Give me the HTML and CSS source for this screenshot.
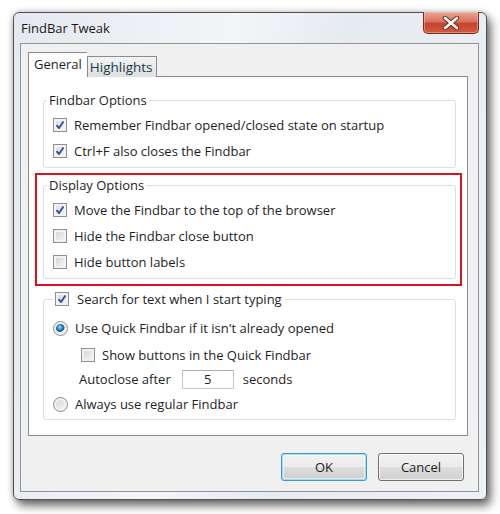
FILE: index.html
```html
<!DOCTYPE html>
<html lang="en">
  <head>
    <meta charset="UTF-8" />
    <link rel="stylesheet" href="styles.css">
    <title>FindBar Tweak</title>
  </head>
  <body>
    <div class="window">
      <div class="titlebar">
        <span class="caption">FindBar Tweak</span>
        <div class="close">
          <svg width="20" height="14" viewBox="0 0 20 14">
            <path d="M4 2 L16 12 M16 2 L4 12" stroke="#6b2a1f" stroke-width="4.5" stroke-linecap="round" />
            <path d="M4 2 L16 12 M16 2 L4 12" stroke="#ffffff" stroke-width="2.6" stroke-linecap="round" />
          </svg>
        </div>
      </div>

      <div class="client">
        <div class="tabs">
          <div class="tab selected">General</div>
          <div class="tab">Highlights</div>
        </div>

        <div class="panel">
          <fieldset class="group">
            <legend>Findbar Options</legend>
            <label class="opt"><span class="check on"></span>Remember Findbar opened/closed state on startup</label>
            <label class="opt gap"><span class="check on"></span>Ctrl+F also closes the Findbar</label>
          </fieldset>

          <div class="callout">
            <fieldset class="group">
              <legend>Display Options</legend>
              <label class="opt"><span class="check on"></span>Move the Findbar to the top of the browser</label>
              <label class="opt gap"><span class="check"></span>Hide the Findbar close button</label>
              <label class="opt gap"><span class="check"></span>Hide button labels</label>
            </fieldset>
          </div>

          <fieldset class="group typing">
            <legend class="opt"><span class="check on"></span>Search for text when I start typing</legend>
            <label class="opt quick"><span class="radio on"></span>Use Quick Findbar if it isn't already opened</label>
            <label class="opt sub"><span class="check"></span>Show buttons in the Quick Findbar</label>
            <div class="opt autoclose">Autoclose after <span class="field">5</span> seconds</div>
            <label class="opt regular"><span class="radio"></span>Always use regular Findbar</label>
          </fieldset>
        </div>

        <div class="buttons">
          <button class="btn default">OK</button>
          <button class="btn">Cancel</button>
        </div>
      </div>
    </div>
  </body>
</html>
```

FILE: styles.css
```css
* {
  margin: 0;
  padding: 0;
  box-sizing: border-box;
}

body {
  width: 500px;
  height: 514px;
  background: #ffffff;
  font-family: "Open Sans", "Noto Sans", sans-serif;
  font-size: 13px;
  color: #1e1e1e;
  overflow: hidden;
}

.window {
  margin: 12px 0 0 13px;
  width: 474px;
  height: 488px;
  border: 1px solid #4d5157;
  border-radius: 6px;
  background: linear-gradient(100deg, #e4e9ef 0%, #f3f5f8 40%, #e6ebf0 60%, #eef1f5 100%);
  box-shadow: 4px 6px 10px rgba(0, 0, 0, 0.55), 0 0 6px rgba(0, 0, 0, 0.25);
  display: flex;
  flex-direction: column;
}

.titlebar {
  height: 30px;
  display: flex;
  align-items: flex-start;
  justify-content: space-between;
  padding-left: 7px;
  padding-right: 7px;
}

.caption {
  margin-top: 5px;
  line-height: 20px;
  color: #1a1a1a;
}

.close {
  width: 56px;
  height: 22px;
  margin-top: -1px;
  border: 1px solid #7a2a1e;
  border-top: none;
  border-radius: 0 0 5px 5px;
  background: linear-gradient(#e9a897 0%, #d8735d 45%, #c4452e 55%, #d25a3f 100%);
  box-shadow: inset 0 0 0 1px rgba(255, 200, 180, 0.45);
  display: flex;
  align-items: center;
  justify-content: center;
}

.client {
  margin: 0 7px 7px 6px;
  flex: 1;
  border: 1px solid #8d949c;
  background: #f0f0f0;
  display: flex;
  flex-direction: column;
}

.tabs {
  display: flex;
  align-items: flex-end;
  padding: 8px 0 0 7px;
  margin-bottom: -1px;
  position: relative;
  z-index: 1;
}

.tab {
  height: 21px;
  padding: 0 3px 0 2px;
  line-height: 20px;
  border: 1px solid #898c95;
  border-bottom: none;
  background: linear-gradient(#f3f4f5, #dcdfe3);
  color: #1e3a44;
  font-size: 13.5px;
}

.tab.selected {
  height: 25px;
  padding: 0 5px;
  line-height: 22px;
  border-right: none;
  background: #ffffff;
  color: #1e1e1e;
  font-size: 13px;
}

.panel {
  margin-left: 7px;
  width: 440px;
  height: 360px;
  border: 1px solid #898c95;
  background: #ffffff;
  padding: 15px 11px 0 14px;
}

.group {
  border: 1px solid #d5dfe5;
  border-radius: 3px;
  padding: 7px 10px 6px 9px;
  min-width: 0;
}

.group legend {
  margin-left: -6px;
  padding: 0 2px;
  line-height: 16px;
}

.opt {
  display: flex;
  align-items: center;
  gap: 7px;
  height: 20px;
  white-space: nowrap;
}

.opt.gap {
  margin-top: 6px;
}

.check,
.radio {
  flex: none;
  width: 14px;
  height: 14px;
  border: 1px solid #8e8f8f;
  background: linear-gradient(135deg, #cfd2d6 0%, #e8e9eb 60%, #f7f7f7 100%);
  box-shadow: inset 0 0 0 2px #f2f2f2;
}

.check.on {
  background-color: #eef2f7;
  background-image: url("data:image/svg+xml,%3Csvg xmlns='http://www.w3.org/2000/svg' width='12' height='12' viewBox='0 0 12 12'%3E%3Cpath d='M2.5 6.2 L5 9 L9.5 2.5' fill='none' stroke='%23344e9a' stroke-width='1.9'/%3E%3C/svg%3E"), linear-gradient(135deg, #d6dbe3, #f6f7f9);
  background-position: center, 0 0;
  background-repeat: no-repeat;
}

.radio {
  width: 15px;
  height: 15px;
  border-radius: 50%;
  border-color: #8a8c8f;
}

.radio.on {
  background: radial-gradient(circle at 45% 40%, #bfe6fa 0, #3a9ad6 2px, #1f5f9e 4px, #2d6fa8 4.5px, #f2f2f2 5px, #e4e5e7 100%);
}

.callout {
  margin: 5px -6px 0 -8px;
  border: 2px solid #d9141d;
  padding: 2px 4px 5px 6px;
}

.typing {
  margin-top: 4px;
  padding: 0 10px 5px 9px;
}

.typing legend {
  margin-left: 0;
  padding: 0 3px 0 2px;
  line-height: 18px;
  height: 18px;
  gap: 8px;
}

.quick {
  margin-top: 10px;
}

.sub {
  margin-top: 7px;
  padding-left: 28px;
}

.autoclose {
  margin-top: 4px;
  padding-left: 26px;
  gap: 0;
}

.field {
  width: 52px;
  height: 19px;
  margin: 0 9px 0 11px;
  border: 1px solid #c5c9cf;
  border-top-color: #abadb3;
  text-align: center;
  line-height: 17px;
}

.regular {
  margin-top: 5px;
}

.buttons {
  display: flex;
  justify-content: flex-end;
  gap: 11px;
  padding: 17px 14px 0 0;
}

.btn {
  width: 86px;
  height: 28px;
  border: 1px solid #707070;
  border-radius: 3px;
  background: linear-gradient(#f2f2f2 0%, #ebebeb 50%, #dddddd 51%, #cfcfcf 100%);
  box-shadow: inset 0 0 0 1px rgba(255, 255, 255, 0.7);
  font-family: inherit;
  font-size: 13px;
  color: #1e1e1e;
}

.btn.default {
  border-color: #3c9ad0;
  box-shadow: inset 0 0 0 1px #9fdcf5, inset 0 0 0 2px rgba(255, 255, 255, 0.5);
}
```
